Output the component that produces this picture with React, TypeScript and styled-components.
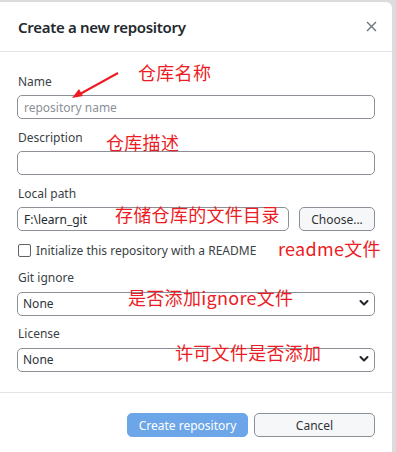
import React from 'react';
import styled, { createGlobalStyle } from 'styled-components';

const GlobalStyle = createGlobalStyle`
  html, body {
    margin: 0;
    padding: 0;
    background: #dcdcdc;
  }
  body {
    font-family: "Noto Sans", "Open Sans", sans-serif;
    color: #24292e;
  }
`;

const Page = styled.div`
  position: relative;
  width: 396px;
  height: 452px;
  padding: 2px 4px 0 0;
  box-sizing: border-box;
  overflow: hidden;
`;

const Dialog = styled.div`
  background: #ffffff;
  width: 392px;
  height: 460px;
  border-top-right-radius: 6px;
  display: flex;
  flex-direction: column;
`;

const Header = styled.header`
  height: 49px;
  display: flex;
  align-items: center;
  justify-content: space-between;
  padding: 0 13px 0 18px;
  border-bottom: 1px solid #e1e4e8;
`;

const Title = styled.h1`
  margin: 0;
  font-size: 15px;
  font-weight: 600;
  color: #24292e;
  letter-spacing: -0.3px;
`;

const CloseButton = styled.button`
  border: none;
  background: none;
  padding: 0;
  width: 16px;
  height: 16px;
  display: flex;
  align-items: center;
  justify-content: center;
  cursor: pointer;
`;

const Body = styled.div`
  padding: 21px 17px 21px 17px;
  display: flex;
  flex-direction: column;
  border-bottom: 1px solid #e1e4e8;
`;

const Field = styled.div<{ $mt?: number }>`
  display: flex;
  flex-direction: column;
  margin-top: ${p => p.$mt ?? 0}px;
`;

const Label = styled.label`
  font-size: 12px;
  line-height: 16px;
  color: #3a3f45;
  padding: 1px 0 0 1px;
  margin-bottom: 5px;
`;

const TextInput = styled.input`
  box-sizing: border-box;
  height: 24px;
  width: 100%;
  border: 1px solid #8b9097;
  border-radius: 5px;
  padding: 0 6px;
  font-family: inherit;
  font-size: 12px;
  color: #24292e;
  background: #fff;
  outline: none;
  &::placeholder {
    color: #8b9097;
  }
`;

const PathRow = styled.div`
  display: flex;
  gap: 10px;
`;

const Button = styled.button<{ $primary?: boolean; $w: number }>`
  box-sizing: border-box;
  height: 24px;
  width: ${p => p.$w}px;
  flex-shrink: 0;
  border-radius: 5px;
  font-family: inherit;
  font-size: 12px;
  padding: 0;
  border: 1px solid ${p => (p.$primary ? '#6ca6e8' : '#8b9097')};
  background: ${p => (p.$primary ? '#6ca6e8' : '#f6f7f9')};
  color: ${p => (p.$primary ? '#ffffff' : '#2e3338')};
`;

const CheckRow = styled.label`
  display: flex;
  align-items: center;
  gap: 5px;
  height: 16px;
  margin: 11px 0 11px 1px;
  font-size: 12px;
  color: #3a3f45;
`;

const CheckBox = styled.span`
  box-sizing: border-box;
  width: 13px;
  height: 13px;
  border: 1px solid #5f6368;
  border-radius: 2px;
  background: #fff;
`;

const SelectWrap = styled.div`
  position: relative;
  height: 24px;
`;

const Select = styled.select`
  appearance: none;
  box-sizing: border-box;
  height: 24px;
  width: 100%;
  border: 1px solid #8b9097;
  border-radius: 5px;
  padding: 0 5px;
  font-family: inherit;
  font-size: 12px;
  color: #2e3338;
  background: #fff;
  outline: none;
`;

const Chevron = styled.svg`
  position: absolute;
  right: 6px;
  top: 8px;
  pointer-events: none;
`;

const Footer = styled.footer`
  padding: 20px 17px;
  display: flex;
  justify-content: flex-end;
  gap: 6px;
`;

const Note = styled.span<{ $x: number; $y: number }>`
  position: absolute;
  left: ${p => p.$x}px;
  top: ${p => p.$y}px;
  font-family: "Noto Sans CJK SC", "Noto Sans", sans-serif;
  font-size: 18px;
  line-height: 20px;
  color: #ec1c24;
  white-space: nowrap;
  letter-spacing: 0.3px;
`;

const Arrow = styled.svg`
  position: absolute;
  left: 68px;
  top: 70px;
`;

function SelectField({ label, mt }: { label: string; mt?: number }) {
  return (
    <Field $mt={mt}>
      <Label>{label}</Label>
      <SelectWrap>
        <Select defaultValue="none">
          <option value="none">None</option>
        </Select>
        <Chevron width="10" height="8" viewBox="0 0 10 8">
          <path d="M1.5 2 L5 5.5 L8.5 2" fill="none" stroke="#1f2328" strokeWidth="2" strokeLinecap="round" strokeLinejoin="round" />
        </Chevron>
      </SelectWrap>
    </Field>
  );
}

export default function App() {
  return (
    <>
      <GlobalStyle />
      <Page>
        <Dialog>
          <Header>
            <Title>Create a new repository</Title>
            <CloseButton aria-label="Close">
              <svg width="11" height="11" viewBox="0 0 11 11">
                <path d="M1 1 L10 10 M10 1 L1 10" stroke="#6a737d" strokeWidth="1.4" />
              </svg>
            </CloseButton>
          </Header>
          <Body>
            <Field>
              <Label>Name</Label>
              <TextInput placeholder="repository name" />
            </Field>
            <Field $mt={10}>
              <Label>Description</Label>
              <TextInput />
            </Field>
            <Field $mt={10}>
              <Label>Local path</Label>
              <PathRow>
                <TextInput defaultValue="F:\learn_git" />
                <Button $w={76}>Choose...</Button>
              </PathRow>
            </Field>
            <CheckRow>
              <CheckBox />
              Initialize this repository with a README
            </CheckRow>
            <SelectField label="Git ignore" />
            <SelectField label="License" mt={10} />
          </Body>
          <Footer>
            <Button $primary $w={121}>Create repository</Button>
            <Button $w={121}>Cancel</Button>
          </Footer>
        </Dialog>

        <Arrow width="56" height="34" viewBox="0 0 56 34">
          <line x1="50" y1="3" x2="12" y2="24" stroke="#ec1c24" strokeWidth="2" />
          <polygon points="4,28 11,19 15,26" fill="#ec1c24" />
        </Arrow>
        <Note $x={138} $y={62}>仓库名称</Note>
        <Note $x={106} $y={132}>仓库描述</Note>
        <Note $x={115} $y={204}>存储仓库的文件目录</Note>
        <Note $x={278} $y={238}>readme文件</Note>
        <Note $x={128} $y={287}>是否添加ignore文件</Note>
        <Note $x={175} $y={342}>许可文件是否添加</Note>
      </Page>
    </>
  );
}
